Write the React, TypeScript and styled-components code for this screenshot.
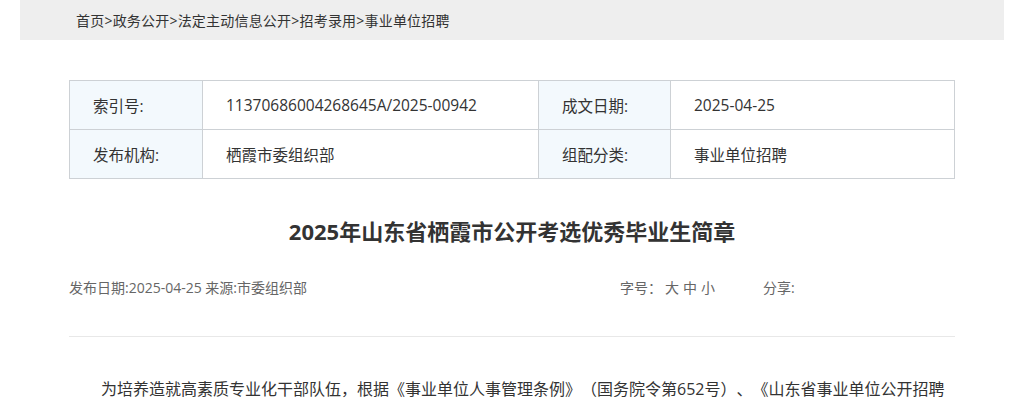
import React from 'react';
import styled, { createGlobalStyle } from 'styled-components';

const GlobalStyle = createGlobalStyle`
  html, body {
    margin: 0;
    padding: 0;
    background: #fff;
    overflow: hidden;
  }
  body {
    font-family: "Open Sans", "Noto Sans CJK SC", sans-serif;
    color: #333;
    text-spacing-trim: space-all;
  }
`;

type InfoRow = {
  label: string;
  value: string;
  label2: string;
  value2: string;
};

const infoRows: InfoRow[] = [
  { label: '索引号:', value: '11370686004268645A/2025-00942', label2: '成文日期:', value2: '2025-04-25' },
  { label: '发布机构:', value: '栖霞市委组织部', label2: '组配分类:', value2: '事业单位招聘' },
];

const crumbs = ['首页', '政务公开', '法定主动信息公开', '招考录用', '事业单位招聘'];

export default function App() {
  return (
    <Page>
      <GlobalStyle />
      <Breadcrumb>
        {crumbs.map((c, i) => (
          <React.Fragment key={c}>
            {i > 0 && <Sep>&gt;</Sep>}
            <CrumbLink href="#">{c}</CrumbLink>
          </React.Fragment>
        ))}
      </Breadcrumb>

      <Content>
        <InfoTable>
          <colgroup>
            <col style={{ width: 133 }} />
            <col style={{ width: 336 }} />
            <col style={{ width: 132 }} />
            <col />
          </colgroup>
          <tbody>
            {infoRows.map((r) => (
              <tr key={r.label}>
                <LabelCell>{r.label}</LabelCell>
                <ValueCell>{r.value}</ValueCell>
                <LabelCell>{r.label2}</LabelCell>
                <ValueCell>{r.value2}</ValueCell>
              </tr>
            ))}
          </tbody>
        </InfoTable>

        <Title>2025年山东省栖霞市公开考选优秀毕业生简章</Title>

        <MetaRow>
          <MetaLeft>发布日期:2025-04-25 来源:市委组织部</MetaLeft>
          <MetaRight>
            <span>字号：</span>
            <SizeLinks>
              <a href="#">大</a>
              <a href="#">中</a>
              <a href="#">小</a>
            </SizeLinks>
            <Share>分享:</Share>
          </MetaRight>
        </MetaRow>

        <Divider />

        <Article>
          为培养造就高素质专业化干部队伍，根据《事业单位人事管理条例》（国务院令第652号）、《山东省事业单位公开招聘
        </Article>
      </Content>
    </Page>
  );
}

const Page = styled.div`
  width: 1024px;
`;

const Breadcrumb = styled.nav`
  margin: 0 20px;
  height: 40px;
  background: #eeeeee;
  display: flex;
  align-items: center;
  padding-left: 56px;
  font-size: 14px;
  letter-spacing: 0.2px;
  color: #333;
`;

const CrumbLink = styled.a`
  color: #333;
  text-decoration: none;
`;

const Sep = styled.span`
  color: #333;
`;

const Content = styled.main`
  width: 886px;
  margin: 40px auto 0;
`;

const InfoTable = styled.table`
  width: 100%;
  border-collapse: collapse;
  table-layout: fixed;
  font-size: 15.5px;
  color: #333;
`;

const LabelCell = styled.td`
  height: 49px;
  padding: 0 0 0 23px;
  background: #f3f9fd;
  border: 1px solid #cdd1d5;
  box-sizing: border-box;
`;

const ValueCell = styled.td`
  height: 49px;
  padding: 0 0 0 23px;
  border: 1px solid #cdd1d5;
  box-sizing: border-box;
`;

const Title = styled.h1`
  margin: 36px 0 0;
  text-align: center;
  font-size: 22px;
  line-height: 32px;
  font-weight: 700;
  color: #333;
`;

const MetaRow = styled.div`
  display: flex;
  align-items: center;
  margin-top: 31px;
  font-size: 14px;
  line-height: 20px;
  color: #666;
`;

const MetaLeft = styled.div`
  flex: 1;
`;

const MetaRight = styled.div`
  width: 335px;
  display: flex;
  align-items: center;
`;

const SizeLinks = styled.span`
  display: flex;
  gap: 4px;
  margin-left: 3px;

  a {
    color: #666;
    text-decoration: none;
  }
`;

const Share = styled.span`
  margin-left: 48px;
`;

const Divider = styled.hr`
  margin: 38px 0 0;
  border: none;
  border-top: 1px solid #e8e8e8;
`;

const Article = styled.p`
  margin: 38px 0 0;
  text-indent: 32px;
  font-size: 16px;
  line-height: 28px;
  color: #333;
`;
